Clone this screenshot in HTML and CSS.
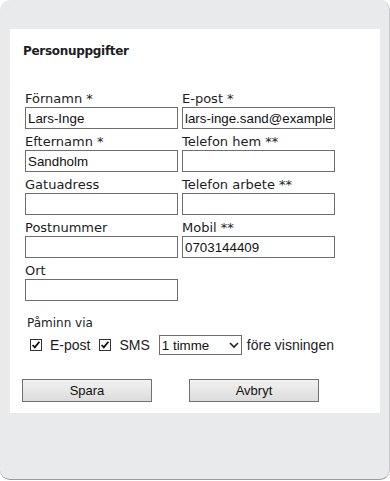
FILE: index.html
```html
<!DOCTYPE html>
<html lang="sv">
<head>
    <meta charset="UTF-8">
    <meta name="viewport" content="width=device-width, initial-scale=1.0">
    <title>Personuppgifter</title>
    <link rel="stylesheet" href="styles.css">
</head>
<body>

    <div class="dialog">
        <div class="panel">
            <h2>Personuppgifter</h2>

            <!-- Kontaktuppgifter -->
            <div class="fields">
                <div class="field">
                    <label for="fornamn">Förnamn *</label>
                    <input type="text" id="fornamn" value="Lars-Inge">
                </div>
                <div class="field">
                    <label for="epost">E-post *</label>
                    <input type="text" id="epost" value="lars-inge.sand@example.com">
                </div>
                <div class="field">
                    <label for="efternamn">Efternamn *</label>
                    <input type="text" id="efternamn" value="Sandholm">
                </div>
                <div class="field">
                    <label for="telhem">Telefon hem **</label>
                    <input type="text" id="telhem">
                </div>
                <div class="field">
                    <label for="gata">Gatuadress</label>
                    <input type="text" id="gata">
                </div>
                <div class="field">
                    <label for="telarb">Telefon arbete **</label>
                    <input type="text" id="telarb">
                </div>
                <div class="field">
                    <label for="postnr">Postnummer</label>
                    <input type="text" id="postnr">
                </div>
                <div class="field">
                    <label for="mobil">Mobil **</label>
                    <input type="text" id="mobil" value="0703144409">
                </div>
                <div class="field">
                    <label for="ort">Ort</label>
                    <input type="text" id="ort">
                </div>
            </div>

            <!-- Påminnelse -->
            <div class="remind">
                <div class="remind-title">Påminn via</div>
                <div class="remind-row">
                    <label class="check">
                        <svg width="12" height="12" viewBox="0 0 12 12"><rect x="0.5" y="0.5" width="11" height="11" fill="#fff" stroke="#333"/><path d="M2.6 6 L4.8 8.4 L9.4 2.8" fill="none" stroke="#111" stroke-width="1.8"/></svg>
                        E-post
                    </label>
                    <label class="check">
                        <svg width="12" height="12" viewBox="0 0 12 12"><rect x="0.5" y="0.5" width="11" height="11" fill="#fff" stroke="#333"/><path d="M2.6 6 L4.8 8.4 L9.4 2.8" fill="none" stroke="#111" stroke-width="1.8"/></svg>
                        SMS
                    </label>
                    <div class="select-wrap">
                        <select>
                            <option>1 timme</option>
                            <option>2 timmar</option>
                            <option>1 dag</option>
                        </select>
                        <svg class="chevron" width="10" height="7" viewBox="0 0 10 7"><path d="M1 1 L5 5 L9 1" fill="none" stroke="#222" stroke-width="1.6"/></svg>
                    </div>
                    <span>före visningen</span>
                </div>
            </div>

            <div class="buttons">
                <button type="button">Spara</button>
                <button type="button">Avbryt</button>
            </div>
        </div>
    </div>

</body>
</html>
```

FILE: styles.css
```css
/* Grundstil */
body {
    margin: 0;
    background-color: #fff;
    font-family: "DejaVu Sans", Verdana, sans-serif;
    color: #1c1c24;
}

.dialog {
    height: 480px;
    box-sizing: border-box;
    background-color: #e8eaeb;
    border-radius: 10px;
    border-right: 1px solid #c9cbcc;
    border-bottom: 1px solid #9a9a9a;
    padding: 29px 9px 0 10px;
}

.panel {
    background-color: #fff;
    padding: 14px 13px 11px 13px;
}

h2 {
    margin: 0;
    font-size: 12px;
    line-height: 16px;
    font-weight: bold;
    letter-spacing: -0.3px;
}

/* Fält i två kolumner */
.fields {
    display: grid;
    grid-template-columns: 153px 153px;
    column-gap: 4px;
    row-gap: 4px;
    margin-top: 31px;
    padding-left: 2px;
}

.field label {
    display: block;
    font-size: 13px;
    line-height: 17px;
}

.field input {
    display: block;
    box-sizing: border-box;
    width: 153px;
    height: 22px;
    margin: 0;
    border: 1px solid #6e6e6e;
    padding: 0 2px;
    font-family: "Liberation Sans", Arial, sans-serif;
    font-size: 13.33px;
    color: #111;
    background: #fff;
}

/* Påminnelse */
.remind {
    margin-top: 15px;
    padding-left: 4px;
}

.remind-title {
    font-size: 12px;
    line-height: 15px;
}

.remind-row {
    display: flex;
    align-items: center;
    margin-top: 4px;
    height: 20px;
    padding-left: 3px;
    font-family: "Liberation Sans", Arial, sans-serif;
    font-size: 14px;
}

.check {
    display: flex;
    align-items: center;
    gap: 8px;
    margin-right: 9px;
}

.select-wrap {
    position: relative;
    margin-right: 5px;
}

.select-wrap select {
    appearance: none;
    -webkit-appearance: none;
    display: block;
    box-sizing: border-box;
    width: 83px;
    height: 20px;
    margin: 0;
    border: 1px solid #6e6e6e;
    border-radius: 0;
    padding: 0 2px;
    background: #fff;
    font-family: "Liberation Sans", Arial, sans-serif;
    font-size: 13.33px;
    color: #111;
}

.chevron {
    position: absolute;
    right: 3px;
    top: 7px;
    pointer-events: none;
}

/* Knappar */
.buttons {
    display: flex;
    gap: 37px;
    margin-top: 24px;
    padding-left: -1px;
    margin-left: -1px;
}

.buttons button {
    width: 130px;
    height: 23px;
    border: 1px solid #707070;
    border-radius: 0;
    background: linear-gradient(#f2f2f2, #dcdcdc);
    font-family: "Liberation Sans", Arial, sans-serif;
    font-size: 13px;
    color: #111;
    padding: 0;
}
```
